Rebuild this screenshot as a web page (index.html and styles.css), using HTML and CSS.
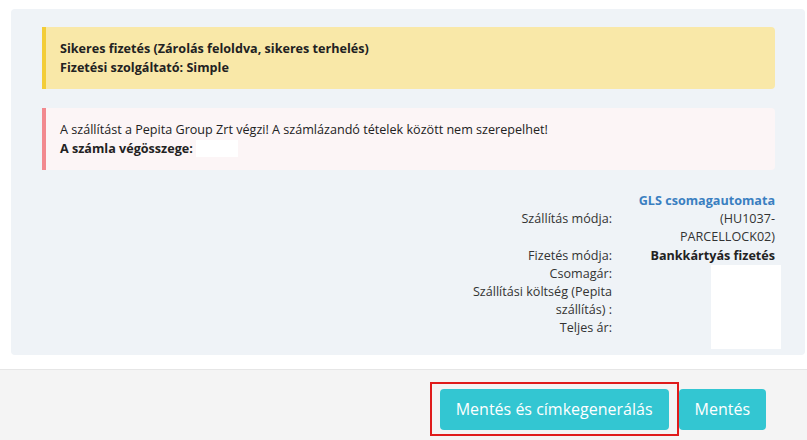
FILE: index.html
```html
<!DOCTYPE html>
<html lang="hu">
<head>
    <meta charset="UTF-8">
    <meta name="viewport" content="width=device-width, initial-scale=1.0">
    <title>Rendelés szállítás</title>
    <link rel="stylesheet" href="styles.css">
</head>
<body>
    <div class="page">
        <div class="panel">
            <!-- Payment status -->
            <div class="alert alert-warning">
                <b>Sikeres fizetés (Zárolás feloldva, sikeres terhelés)</b><br>
                <b>Fizetési szolgáltató: Simple</b>
            </div>

            <!-- Shipping notice -->
            <div class="alert alert-danger">
                A szállítást a Pepita Group Zrt végzi! A számlázandó tételek között nem szerepelhet!<br>
                <b>A számla végösszege:</b> <span class="masked"></span>
            </div>

            <div class="summary">
                <table class="summary-table">
                    <colgroup>
                        <col class="col-label">
                        <col class="col-value">
                    </colgroup>
                    <tr>
                        <td class="label">Szállítás módja:</td>
                        <td class="value"><span class="link">GLS csomagautomata</span><br>(HU1037-PARCELLOCK02)</td>
                    </tr>
                    <tr>
                        <td class="label">Fizetés módja:</td>
                        <td class="value"><b>Bankkártyás fizetés</b></td>
                    </tr>
                    <tr>
                        <td class="label">Csomagár:</td>
                        <td class="value"></td>
                    </tr>
                    <tr>
                        <td class="label">Szállítási költség (Pepita szállítás) :</td>
                        <td class="value"></td>
                    </tr>
                    <tr>
                        <td class="label">Teljes ár:</td>
                        <td class="value"></td>
                    </tr>
                </table>
                <div class="masked-block"></div>
            </div>
        </div>
    </div>

    <div class="footer">
        <span class="highlight">
            <button class="btn">Mentés és címkegenerálás</button>
        </span>
        <button class="btn">Mentés</button>
    </div>
</body>
</html>
```

FILE: styles.css
```css
body {
    margin: 0;
    font-family: "Open Sans", Arial, sans-serif;
    font-size: 12.6px;
    color: #222;
    background: #fff;
}
.page {
    padding: 9px 2px 14px 11px;
}
.panel {
    background: #eff3f7;
    border-radius: 4px;
    padding: 18px 30px 17px 31px;
}
.alert {
    line-height: 19px;
    padding: 12px 14px;
    border-left: 4px solid transparent;
    border-radius: 0 4px 4px 0;
    margin-bottom: 19px;
}
.alert b {
    font-weight: 700;
}
.alert-warning {
    background: #f9e8a8;
    border-left-color: #f3cd38;
}
.alert-danger {
    background: #fcf5f6;
    border-left-color: #f2898f;
    margin-bottom: 0;
}
.masked {
    display: inline-block;
    width: 42px;
    height: 17px;
    background: #fff;
    vertical-align: -4px;
}
.summary {
    position: relative;
    display: flex;
    justify-content: flex-end;
    margin-top: 22px;
}
.summary-table {
    border-collapse: collapse;
    table-layout: fixed;
    width: 308px;
    line-height: 18.2px;
    color: #333;
}
.col-label {
    width: 166px;
}
.col-value {
    width: 142px;
}
.summary-table td {
    padding: 0;
}
.label {
    text-align: right;
    padding-right: 21px !important;
    vertical-align: middle;
}
.value {
    text-align: right;
    vertical-align: middle;
}
.value b {
    color: #222;
}
.link {
    color: #3a7fc1;
    font-weight: 700;
}
.masked-block {
    position: absolute;
    right: -6px;
    top: 73px;
    width: 70px;
    height: 84px;
    background: #fff;
}
.footer {
    border-top: 1px solid #e6e6e6;
    background: #f4f4f4;
    min-height: 72px;
    display: flex;
    justify-content: flex-end;
    align-items: flex-start;
    gap: 10px;
    padding: 19px 41px 0 0;
    box-sizing: border-box;
}
.highlight {
    position: relative;
    display: inline-flex;
}
.highlight::after {
    content: "";
    position: absolute;
    top: -7px;
    bottom: -6px;
    left: -10px;
    right: -10px;
    border: 2px solid #e01b1b;
}
.btn {
    background: #33c6d2;
    color: #fff;
    border: none;
    border-radius: 4px;
    font-family: "Open Sans", Arial, sans-serif;
    font-size: 16px;
    height: 41px;
    padding: 0 16px;
    cursor: pointer;
}
```
